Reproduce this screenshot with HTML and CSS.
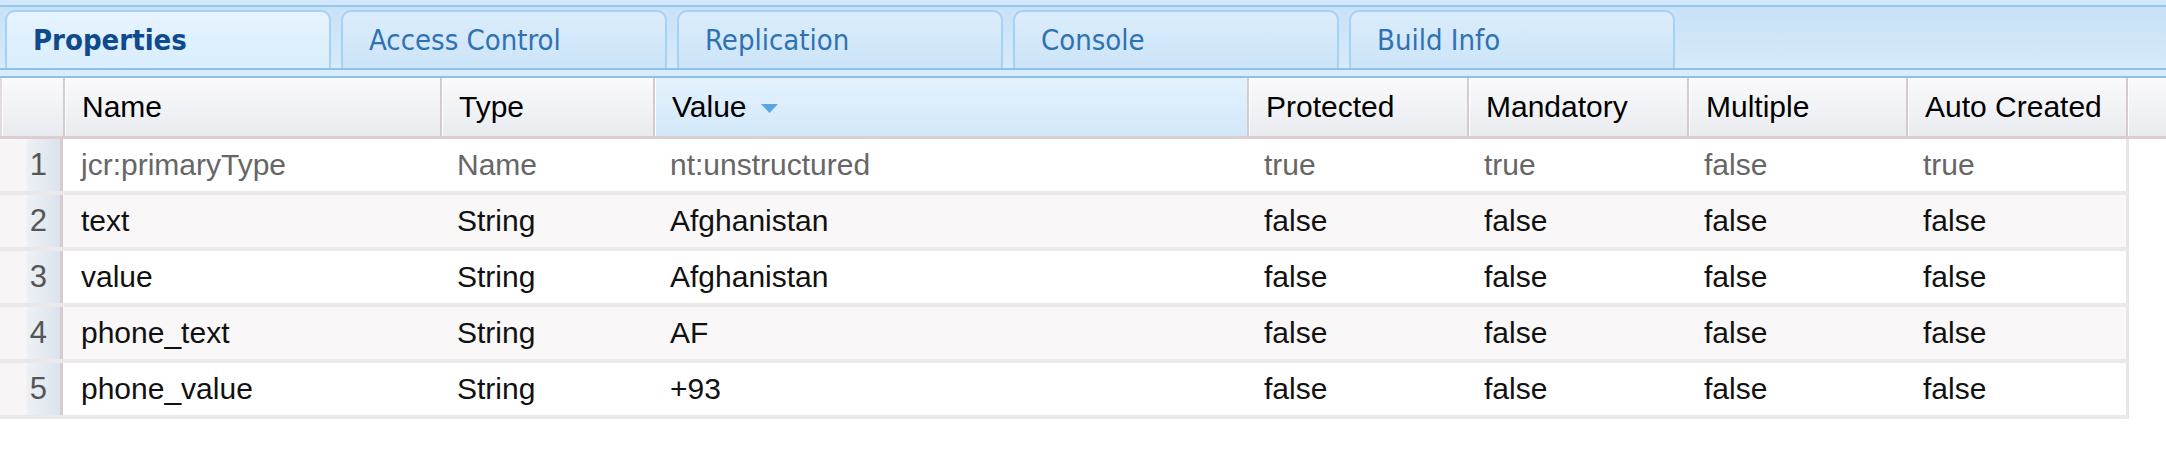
FILE: index.html
```html
<!DOCTYPE html>
<html>
<head>
<meta charset="utf-8">
<link rel="stylesheet" href="styles.css">
</head>
<body>
<div class="topline"></div>
<div class="tabstrip">
  <div class="tab active">Properties</div>
  <div class="tab">Access Control</div>
  <div class="tab">Replication</div>
  <div class="tab">Console</div>
  <div class="tab">Build Info</div>
</div>
<div class="band"></div>
<div class="grid">
  <div class="hrow">
    <div class="hc num"></div>
    <div class="hc">Name</div>
    <div class="hc">Type</div>
    <div class="hc sorted">Value<svg class="arrow" width="17" height="9" viewBox="0 0 17 9"><polygon points="0,0 17,0 8.5,9" fill="#5aa6e4"/></svg></div>
    <div class="hc">Protected</div>
    <div class="hc">Mandatory</div>
    <div class="hc">Multiple</div>
    <div class="hc">Auto Created</div>
    <div class="hc filler"></div>
  </div>
  <div class="row dim">
    <div class="c num">1</div><div class="c">jcr:primaryType</div><div class="c">Name</div><div class="c">nt:unstructured</div><div class="c">true</div><div class="c">true</div><div class="c">false</div><div class="c">true</div>
  </div>
  <div class="row alt">
    <div class="c num">2</div><div class="c">text</div><div class="c">String</div><div class="c">Afghanistan</div><div class="c">false</div><div class="c">false</div><div class="c">false</div><div class="c">false</div>
  </div>
  <div class="row">
    <div class="c num">3</div><div class="c">value</div><div class="c">String</div><div class="c">Afghanistan</div><div class="c">false</div><div class="c">false</div><div class="c">false</div><div class="c">false</div>
  </div>
  <div class="row alt">
    <div class="c num">4</div><div class="c">phone_text</div><div class="c">String</div><div class="c">AF</div><div class="c">false</div><div class="c">false</div><div class="c">false</div><div class="c">false</div>
  </div>
  <div class="row">
    <div class="c num">5</div><div class="c">phone_value</div><div class="c">String</div><div class="c">+93</div><div class="c">false</div><div class="c">false</div><div class="c">false</div><div class="c">false</div>
  </div>
</div>
</body>
</html>
```
FILE: styles.css
```css
html, body {
  margin: 0;
  padding: 0;
  background: #ffffff;
}
body {
  width: 2166px;
  font-family: "Liberation Sans", Arial, sans-serif;
  font-size: 30px;
  color: #111;
}
.topline {
  height: 5px;
  background: #d2e7f9;
  border-bottom: 2px solid #98c7ec;
}
.tabstrip {
  display: flex;
  gap: 10px;
  height: 58px;
  padding: 3px 0 0 5px;
  background: linear-gradient(#c7e1f7, #d6ebfb);
  border-bottom: 2px solid #8ec1ea;
}
.tab {
  box-sizing: border-box;
  width: 326px;
  height: 58px;
  display: flex;
  align-items: center;
  padding: 0 0 0 26px;
  border: 2px solid #a8d0f0;
  border-bottom: none;
  border-radius: 10px 10px 0 0;
  background: linear-gradient(#dbedfc, #cce4f8);
  font-family: "DejaVu Sans Condensed", "DejaVu Sans", sans-serif;
  font-stretch: condensed;
  font-size: 29px;
  color: #2f72b3;
}
.tab.active {
  background: linear-gradient(#e6f4fe, #d9edfc);
  font-weight: bold;
  color: #0e4a8c;
}
.band {
  height: 6px;
  background: #d8ecfb;
  border-bottom: 2px solid #8ec1ea;
}
.grid {
  --cols: 63px 377px 213px 594px 220px 220px 219px 220px;
}
.hrow {
  display: grid;
  grid-template-columns: var(--cols) 1fr;
  height: 58px;
  background: linear-gradient(#fafafb, #e9ebf0);
  border-bottom: 3px solid #dccdd1;
}
.hc {
  display: flex;
  align-items: center;
  padding-left: 17px;
  color: #000;
  border-left: 2px solid #d4cbce;
  box-shadow: inset 1px 0 0 #ffffff;
}
.hc.num {
  border-left: 2px solid #e2dcde;
  padding: 0;
}
.hc.sorted {
  background: linear-gradient(#e4f2fd, #d2e8fa);
}
.arrow {
  margin-left: 14px;
  margin-top: 3px;
}
.row {
  display: grid;
  grid-template-columns: var(--cols);
  width: 2126px;
  height: 52px;
  border-bottom: 4px solid #ece8ea;
  border-right: 3px solid #ebe4e7;
  background: #ffffff;
}
.row.alt {
  background: #f9f7f8;
}
.c {
  display: flex;
  align-items: center;
  padding-left: 17px;
  white-space: nowrap;
}
.row .c:nth-child(2) {
  padding-left: 18px;
}
.c.num {
  justify-content: flex-end;
  padding: 0 13px 0 0;
  font-size: 31px;
  color: #555;
  background: linear-gradient(to right, #f7f5f6 0, #f7f5f6 26px, #edf1f6 27px, #dce3ec 60px);
  border-right: 3px solid #d8cbcf;
}
.row.dim .c {
  color: #666;
}
.row.dim .c.num {
  color: #555;
}
```
